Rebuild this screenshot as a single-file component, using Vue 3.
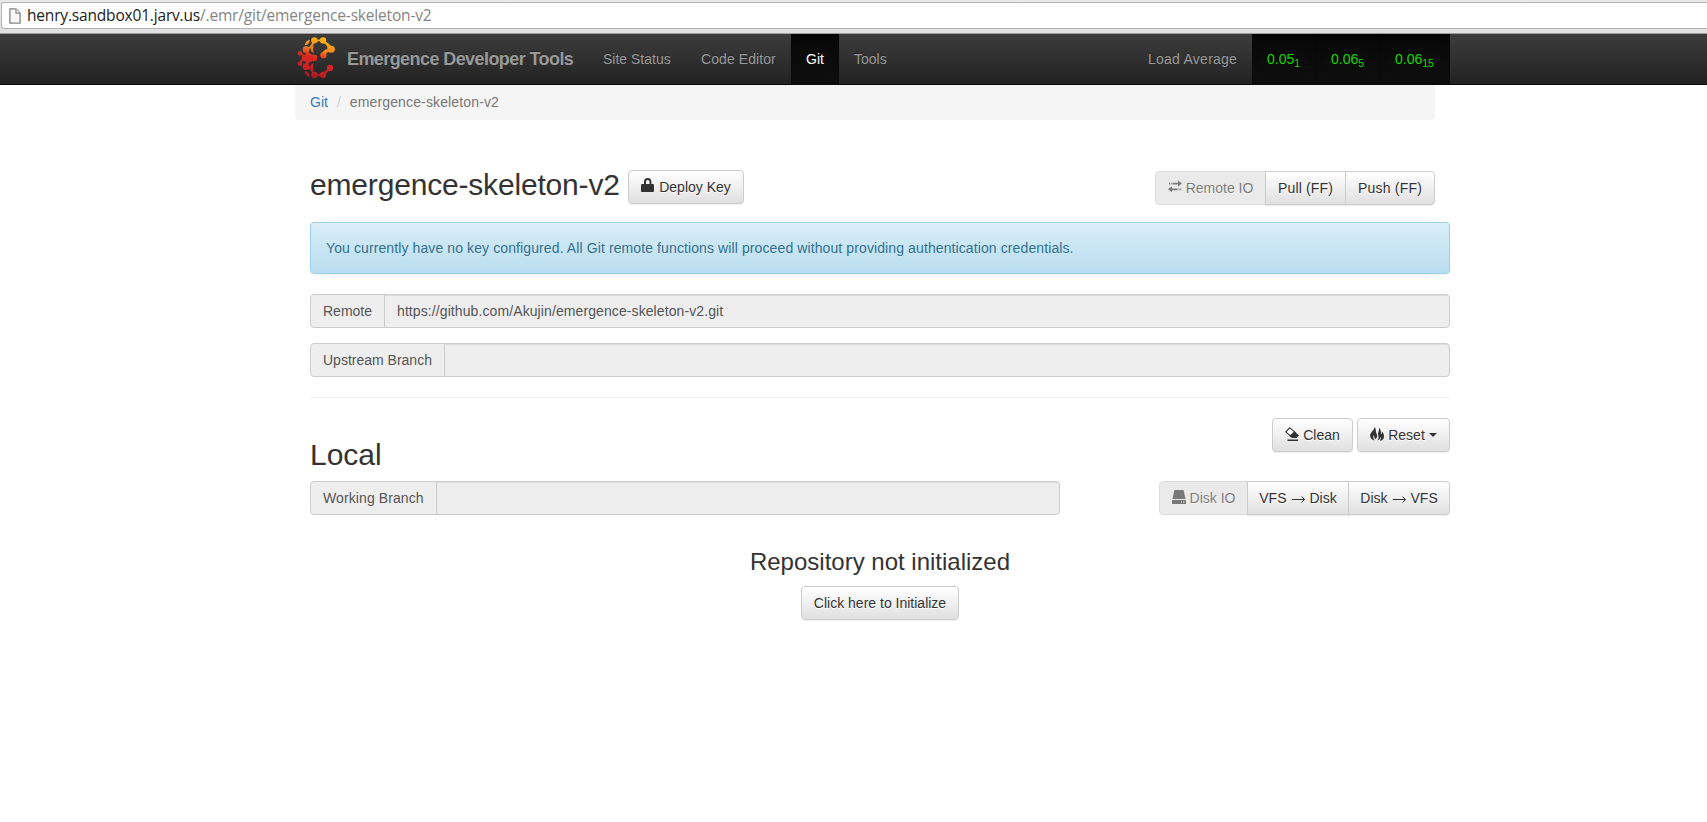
<script setup>
const links = [
  { label: 'Site Status', cls: 'site' },
  { label: 'Code Editor', cls: 'code' },
  { label: 'Git', cls: 'git active' },
  { label: 'Tools', cls: 'tools' }
]
const loads = [
  { value: '0.05', span: '1' },
  { value: '0.06', span: '5' },
  { value: '0.06', span: '15' }
]
</script>

<template>
  <div class="page">
    <div class="address">
      <div class="omnibox">
        <svg class="doc" width="12" height="16" viewBox="0 0 12 16">
          <path d="M.9 .9H7l4.1 4.2v10H.9z" fill="#f7f7f7" stroke="#858585" stroke-width="1.3" />
          <path d="M7 1v4.2h4" fill="#fff" stroke="#858585" stroke-width="1.2" />
        </svg>
        <span class="url"><b>henry.sandbox01.jarv.us</b>/.emr/git/emergence-skeleton-v2</span>
      </div>
    </div>

    <nav class="navbar">
      <div class="container bar">
        <svg class="logo" width="40" height="44" viewBox="888 108 120 132">
          <defs>
            <linearGradient id="flame" gradientUnits="userSpaceOnUse" x1="965" y1="112" x2="930" y2="235">
              <stop offset="0" stop-color="#fdb813" />
              <stop offset=".28" stop-color="#f58a20" />
              <stop offset=".5" stop-color="#d9281f" />
              <stop offset=".75" stop-color="#cf2027" />
              <stop offset="1" stop-color="#981a1d" />
            </linearGradient>
          </defs>
          <g fill="url(#flame)">
            <circle cx="943" cy="121" r="9.500" /><circle cx="969" cy="121" r="9.500" />
            <circle cx="994" cy="148" r="10.500" /><circle cx="970" cy="166" r="9.500" />
            <circle cx="918" cy="149" r="10" /><circle cx="900" cy="160" r="6.500" />
            <circle cx="915" cy="174" r="10" /><circle cx="942" cy="174" r="10" />
            <circle cx="900" cy="191" r="6.500" /><circle cx="918" cy="200" r="10" />
            <circle cx="990" cy="204" r="9.500" /><circle cx="943" cy="225" r="9.500" />
            <circle cx="969" cy="225" r="9.500" />
            <path d="M929 119q-13 3-15 17q15-1 15-17zM942 136q-23 12 0 25q-6-13 0-25zM942 188q-23 12 0 25q-6-12 0-25zM914 213q1 16 15 18q0-17-15-18z" />
            <path d="M971 121q12 6 23 18l-3 18q-12-3-15 9l-12-2q4-14 18-16q2-14-13-18zM921 150q6 14 21 15l-2 18q-13 1-19 15l-6-18q6-6 0-12zM969 216q11-1 18-15l8 8q-15 3-18 16z" />
          </g>
          <path d="M943 121H969M900 160Q908 163 915 174M915 174Q906 178 900 191M943 225H969M918 200Q934 204 943 225M943 121Q934 145 918 149" fill="none" stroke="url(#flame)" stroke-width="5" />
        </svg>
        <span class="brand">Emergence Developer Tools</span>
        <a v-for="l in links" :key="l.label" class="link" :class="l.cls">{{ l.label }}</a>
        <span class="link average">Load Average</span>
        <div class="loads">
          <span v-for="l in loads" :key="l.span" class="load">{{ l.value }}<sub>{{ l.span }}</sub></span>
        </div>
      </div>
    </nav>

    <main class="container">
      <div class="crumbs"><a>Git</a><i>/</i><span>emergence-skeleton-v2</span></div>

      <div class="content">
        <header class="title-row">
          <h2 class="repo">emergence-skeleton-v2</h2>
          <button class="btn deploy">
            <svg width="14" height="15" viewBox="0 0 14 15"><path fill="#333" fill-rule="evenodd" d="M3 6V3.500Q3 0 6.700 0T10.400 3.500V6H12q1 0 1 1v6q0 1-1 1H1q-1 0-1-1V7q0-1 1-1zM5 6h3.500V3.500Q8.500 2 6.700 2T5 3.500z" /></svg>
            <span>Deploy Key</span>
          </button>
          <div class="group remote">
            <button class="btn off">
              <svg width="14" height="14" viewBox="0 0 14 14" fill="#333"><path d="M4.500 2.700H10V.5l4 3-4 3V4.500H4.500zM1 2.700h1v1.800H1zM2.700 2.700h1v1.800h-1zM9.500 8.500H4V6.300l-4 3 4 3v-2h5.500zM10.500 8.500h1v1.800h-1zM12.300 8.500h1v1.800h-1z" /></svg>
              <span>Remote IO</span>
            </button>
            <button class="btn">Pull (FF)</button>
            <button class="btn">Push (FF)</button>
          </div>
        </header>

        <div class="alert"><span>You currently have no key configured. All Git remote functions will proceed without providing authentication credentials.</span></div>

        <div class="field"><label class="w-remote">Remote</label><div class="value"><span>https://github.com/Akujin/emergence-skeleton-v2.git</span></div></div>
        <div class="field"><label class="w-up">Upstream Branch</label><div class="value"></div></div>
        <hr />

        <section class="local-row">
          <h2>Local</h2>
          <div class="actions">
            <button class="btn clean">
              <svg width="14" height="14" viewBox="0 0 14 14"><path d="M4.800.8L10 5.200 6 9.600.9 4.800z" fill="#fff" stroke="#333" stroke-width="1.100" /><path d="M9.300 4.300L14 8.500 11.500 11H7L4.700 8.800zM2.500 12.600H13V14H2.500z" fill="#333" /></svg>
              <span>Clean</span>
            </button>
            <button class="btn reset">
              <svg width="14" height="14" viewBox="0 0 14 14" fill="#333"><path d="M4.500 0C5 3 .1 5 .1 8.600c0 2.600 1.700 4.200 4.400 4.800C2.900 11.400 3 9.500 3.900 8c.5 1.500.2 3 1.500 4.200C7.600 10.500 7.700 8 6.400 6.200 5.300 4.500 6.700 2 4.500 0zM8.800.6c1 3-1.200 4.400-.6 7.400.4 2 .8 3.200-.7 5.600 2-.5 2.800-1.700 2.500-3.800 1.100 1 .9 2.600.1 4.200 2.900-.7 3.900-2.600 3.900-4.800 0-2-.9-3.600-2.200-4.600.4 1.500 0 2.200-.7 2.700C10.900 5 11 2.300 8.800.6z" /></svg>
              <span>Reset</span><b class="caret"></b>
            </button>
          </div>
        </section>

        <section class="disk-row">
          <div class="field working"><label class="w-work">Working Branch</label><div class="value"></div></div>
          <div class="group disk">
            <button class="btn off">
              <svg width="14" height="14" viewBox="0 0 14 14"><path d="M3 0h8q.5 0 .7.600L13.500 9H.5L2.300.6Q2.500 0 3 0zM.5 10h13q.5 0 .5.500v3q0 .5-.5.5H.5q-.5 0-.5-.5v-3q0-.5.5-.5z" fill="#333" /><path d="M9 11.500h1v1H9zM11 11.500h1.500v1H11z" fill="#ddd" /></svg>
              <span>Disk IO</span>
            </button>
            <button class="btn"><span>VFS</span><svg class="arrow" width="14" height="8" viewBox="0 0 14 8"><path d="M0 4.500h12.500M9.500 1.500l3 3-3 3" fill="none" stroke="#333" /></svg><span>Disk</span></button>
            <button class="btn"><span>Disk</span><svg class="arrow" width="14" height="8" viewBox="0 0 14 8"><path d="M0 4.500h12.500M9.500 1.500l3 3-3 3" fill="none" stroke="#333" /></svg><span>VFS</span></button>
          </div>
        </section>

        <section class="empty">
          <h3>Repository not initialized</h3>
          <button class="btn init">Click here to Initialize</button>
        </section>
      </div>
    </main>
  </div>
</template>

<style>
body { background: #fff; }
</style>

<style scoped>
* { box-sizing: border-box; }
.page { width: 1707px; height: 822px; overflow: hidden; font: 14px/20px "Liberation Sans", Arial, sans-serif; color: #333; background: #fff; }
.address { height: 34px; padding: 2px 0 0 1px; background: linear-gradient(#e9e9e9, #e1e1e1); border-bottom: 1px solid #9c9c9c; }
.omnibox { height: 27px; display: flex; align-items: center; padding-left: 7px; background: #fff; border: 1px solid #b4b4b4; border-right: 0; border-radius: 3px 0 0 3px; }
.url { margin: -2px 0 0 6px; font: 15.5px/24px "Open Sans", sans-serif; letter-spacing: -.18px; color: #858585; white-space: nowrap; }
.url b { font-weight: 400; color: #222; }
.container { width: 1170px; margin-left: 280px; }
.navbar { height: 51px; background: linear-gradient(#3c3c3c, #222); border-bottom: 1px solid #080808; }
.bar { display: flex; height: 50px; padding: 0 0 0 16px; line-height: 50px; color: #999; text-shadow: 0 -1px 0 rgba(0,0,0,.25); white-space: nowrap; }
.logo { margin-top: 2px; flex: none; }
.brand { width: 252px; padding-left: 11px; font-size: 18px; font-weight: 700; letter-spacing: -.58px; flex: none; }
.link { flex: none; padding-left: 15px; }
.site { width: 98px; }
.code { width: 105px; letter-spacing: .08px; }
.git { width: 48px; }
.active { color: #fff; background: linear-gradient(#080808, #0f0f0f); box-shadow: inset 0 3px 9px rgba(0,0,0,.25); }
.average { width: 119px; margin-left: auto; letter-spacing: .25px; }
.loads { display: flex; color: #1ad600; }
.load { width: 64px; padding-left: 15px; background: linear-gradient(#080808, #0f0f0f); box-shadow: inset 0 3px 9px rgba(0,0,0,.25); }
.load:last-child { width: 70px; }
sub { font-size: 10.5px; line-height: 0; position: relative; vertical-align: baseline; bottom: -.25em; }
.crumbs { width: 1140px; height: 35px; margin-left: 15px; padding: 7px 15px; background: #f5f5f5; border-radius: 0 0 4px 4px; color: #777; }
.crumbs a { color: #337ab7; }
.crumbs i { font-style: normal; color: #ccc; margin: 0 9px 0 9px; }
.crumbs span { letter-spacing: .14px; }
.content { padding-left: 30px; }
.title-row { display: flex; height: 102px; padding-top: 50px; }
h2 { margin: 0; font-size: 30px; line-height: 33px; font-weight: 500; }
.repo { width: 318px; margin-top: -2px; white-space: nowrap; letter-spacing: -.18px; }
.btn { height: 34px; padding: 0; display: flex; align-items: center; justify-content: center; font: 14px/20px "Liberation Sans", Arial, sans-serif; color: #333; text-shadow: 0 1px 0 #fff; white-space: pre; background: linear-gradient(#fff, #e0e0e0); border: 1px solid #ccc; border-radius: 4px; box-shadow: inset 0 1px 0 rgba(255,255,255,.15), 0 1px 1px rgba(0,0,0,.075); }
.btn svg { margin-right: 4px; margin-top: -3px; }
.btn .arrow { margin: 1px 4px 0 5px; }
.deploy { width: 116px; }
.group { display: flex; }
.group .btn { border-radius: 0; margin-left: -1px; }
.group .btn:first-child { border-radius: 4px 0 0 4px; margin-left: 0; }
.group .btn:last-child { border-radius: 0 4px 4px 0; }
.group .off { background: #e0e0e0; opacity: .65; box-shadow: none; }
.remote { margin: 1px 15px 0 auto; }
.remote .btn:nth-child(1) { width: 111px; }
.remote .btn:nth-child(2) { width: 81px; letter-spacing: .15px; }
.remote .btn:nth-child(3) { width: 90px; letter-spacing: .2px; }
.alert { height: 52px; padding: 15px; background: linear-gradient(#d9edf7, #b9def0); border: 1px solid #9acfea; border-radius: 4px; color: #31708f; text-shadow: 0 1px 0 rgba(255,255,255,.2); box-shadow: inset 0 1px 0 rgba(255,255,255,.25), 0 1px 2px rgba(0,0,0,.05); margin-bottom: 20px; letter-spacing: .105px; white-space: nowrap; }
.field { display: flex; height: 34px; margin-bottom: 15px; border: 1px solid #ccc; border-radius: 4px; background: #eee; line-height: 32px; color: #555; overflow: hidden; white-space: nowrap; }
.field label { flex: none; padding-left: 12px; border-right: 1px solid #ccc; }
.w-remote { width: 74px; }
.w-up { width: 134px; }
.w-work { width: 126px; letter-spacing: .1px; }
.value { flex: 1; padding-left: 12px; box-shadow: inset 0 1px 1px rgba(0,0,0,.075); letter-spacing: .095px; }
hr { margin: 20px 0; border: 0; border-top: 1px solid #eee; }
.local-row { display: flex; justify-content: space-between; height: 63px; }
.local-row h2 { margin-top: 20px; }
.actions { display: flex; gap: 4px; }
.clean { width: 81px; }
.reset { width: 93px; }
.caret { border: 4px solid transparent; border-top-color: #333; border-bottom: 0; margin-left: 4px; }
.disk-row { display: flex; justify-content: space-between; height: 68px; }
.working { width: 750px; }
.disk .btn:nth-child(1) { width: 89px; }
.disk .btn:nth-child(2) { width: 102px; }
.disk .btn:nth-child(3) { width: 102px; }
.empty { display: flex; flex-direction: column; align-items: center; }
h3 { margin: 0 0 11px; font-size: 24px; line-height: 26px; font-weight: 500; }
.init { width: 158px; }
</style>
